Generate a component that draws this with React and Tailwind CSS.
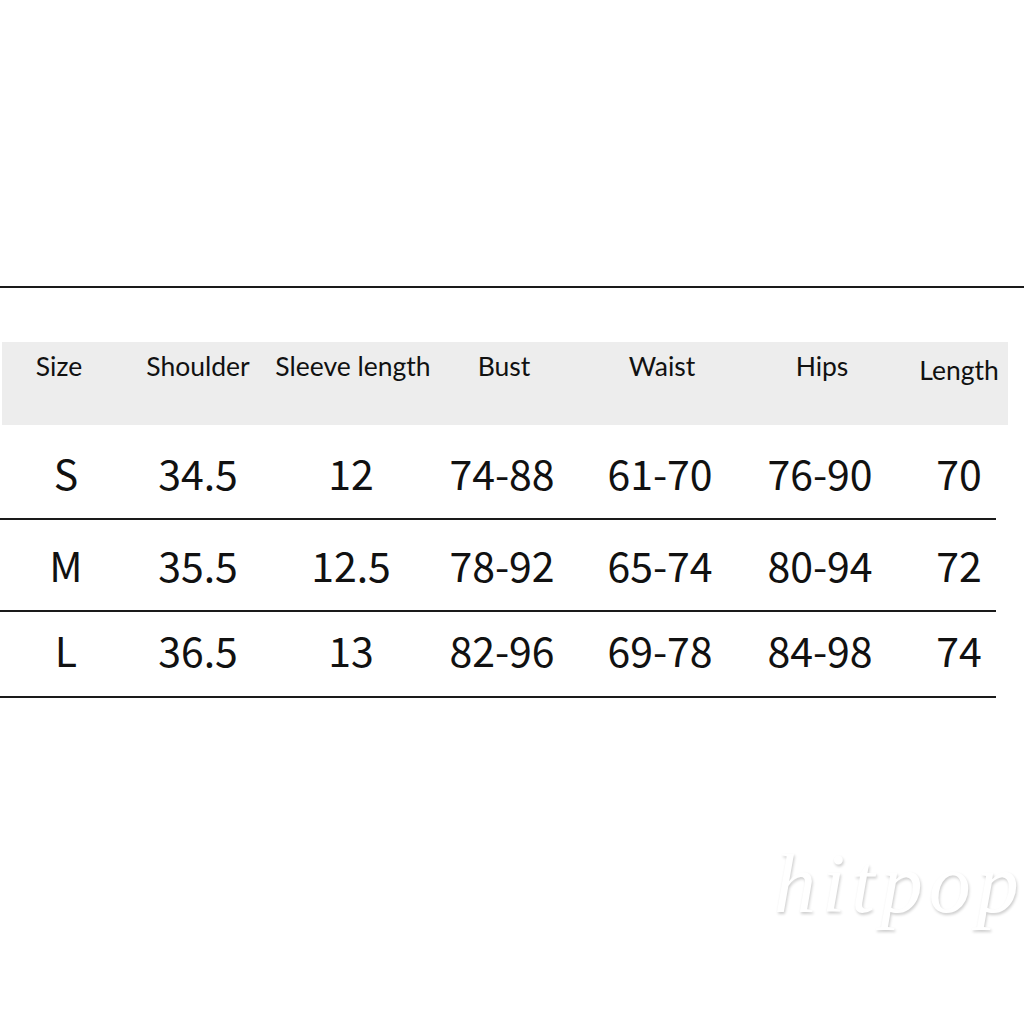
const headers = ["Size", "Shoulder", "Sleeve length", "Bust", "Waist", "Hips", "Length"];

const rows = [
  ["S", "34.5", "12", "74-88", "61-70", "76-90", "70"],
  ["M", "35.5", "12.5", "78-92", "65-74", "80-94", "72"],
  ["L", "36.5", "13", "82-96", "69-78", "84-98", "74"],
];

const cols = "grid grid-cols-[124px_148px_158px_144px_172px_148px_130px]";

export default function App() {
  return (
    <div className="relative h-[1024px] w-[1024px] overflow-hidden bg-white text-[#111]">
      <div className="h-[286px]" />
      <div className="h-[2px] w-full bg-[#1a1a1a]" />
      <div className="h-[54px]" />

      <div className={`${cols} ml-[2px] h-[83px] w-[1006px] bg-[#ededed] pt-[8px] font-['Lato','Open_Sans',sans-serif] text-[26.5px]`}>
        {headers.map((h, i) => (
          <div
            key={h}
            className={`whitespace-nowrap text-center leading-[32px] ${i === 0 ? "pr-[10px]" : ""} ${i === 1 ? "pr-[4px]" : ""} ${i === 6 ? "pt-[4px] pr-[4px]" : ""}`}
          >
            {h}
          </div>
        ))}
      </div>

      <div className="w-[996px] font-['Noto_Sans_CJK_SC','Noto_Sans',sans-serif] text-[41px]">
        {rows.map((r, ri) => (
          <div key={r[0]}>
            <div className={`${cols} ${ri === 0 ? "h-[93px] pt-[22px]" : ri === 1 ? "h-[90px] pt-[19px]" : "h-[84px] pt-[12px]"}`}>
              {r.map((v, i) => (
                <div key={i} className={`text-center leading-[50px] ${i === 0 ? "pl-[8px]" : ""}`}>
                  {v}
                </div>
              ))}
            </div>
            <div className="h-[2px] w-full bg-[#1a1a1a]" />
          </div>
        ))}
      </div>

      <div className="absolute left-[774px] top-[834px] font-['Liberation_Serif',serif] text-[84px] italic leading-[100px] tracking-[6px] text-white [text-shadow:1px_2px_3px_rgba(0,0,0,0.2)]">
        hitpop
      </div>
    </div>
  );
}
